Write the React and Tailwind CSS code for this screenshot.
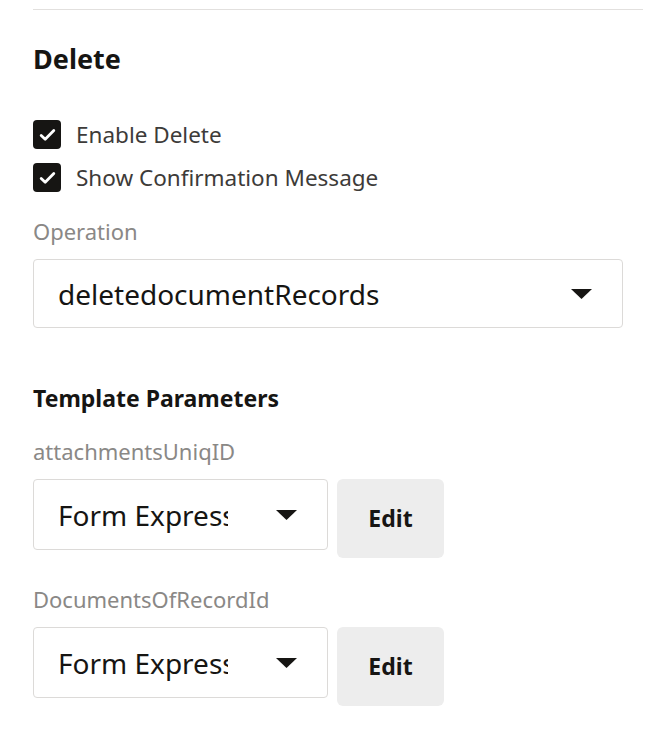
import React from 'react';

function Check({ label }) {
  return (
    <label className="flex items-center gap-[15px] h-[29px]">
      <span className="w-[28px] h-[29px] rounded-[4px] bg-[#161513] flex items-center justify-center">
        <svg width="17" height="14" viewBox="0 0 17 14" fill="none">
          <path d="M2.2 7.4l4 3.8L14.8 2.6" stroke="white" strokeWidth="2.8" strokeLinecap="round" strokeLinejoin="round" />
        </svg>
      </span>
      <span className="text-[22.5px] text-[#3d3b39]">{label}</span>
    </label>
  );
}

function Caret() {
  return (
    <svg width="21" height="10" viewBox="0 0 21 10" className="shrink-0">
      <path d="M0 0h21L10.5 10z" fill="#161513" />
    </svg>
  );
}

function ParamRow({ label }) {
  return (
    <div>
      <div className="text-[22px] text-[#8a8886] leading-[30px] mb-[13px]">{label}</div>
      <div className="flex items-start gap-[9px]">
        <div className="w-[295px] h-[71px] border border-[#dcdad8] rounded-[4px] flex items-center pl-[24px] pr-[30px]">
          <span className="w-[170px] overflow-hidden whitespace-nowrap text-[28px] text-[#161513]">Form Express</span>
          <div className="ml-auto"><Caret /></div>
        </div>
        <button className="w-[107px] h-[79px] rounded-[6px] bg-[#ededed] text-[23px] font-bold text-[#161513]">Edit</button>
      </div>
    </div>
  );
}

export default function App() {
  return (
    <div className="w-[668px] h-[748px] bg-white pl-[33px] pr-[25px] pt-[9px]" style={{ fontFamily: '"Noto Sans", "Open Sans", sans-serif' }}>
      <div className="border-t border-[#e2e0de]" />
      <h2 className="mt-[32px] text-[27px] font-bold text-[#161513] leading-[34px]">Delete</h2>

      <div className="mt-[44px] flex flex-col gap-[14px]">
        <Check label="Enable Delete" />
        <Check label="Show Confirmation Message" />
      </div>

      <div className="mt-[24px] text-[22px] text-[#8a8886] leading-[30px]">Operation</div>
      <div className="mt-[13px] w-[590px] h-[69px] border border-[#dcdad8] rounded-[4px] flex items-center pl-[24px] pr-[30px]">
        <span className="text-[28px] text-[#161513]">deletedocumentRecords</span>
        <div className="ml-auto"><Caret /></div>
      </div>

      <h3 className="mt-[55px] text-[23px] font-bold text-[#161513] leading-[30px]">Template Parameters</h3>

      <div className="mt-[23px] flex flex-col gap-[26px]">
        <ParamRow label="attachmentsUniqID" />
        <ParamRow label="DocumentsOfRecordId" />
      </div>
    </div>
  );
}
